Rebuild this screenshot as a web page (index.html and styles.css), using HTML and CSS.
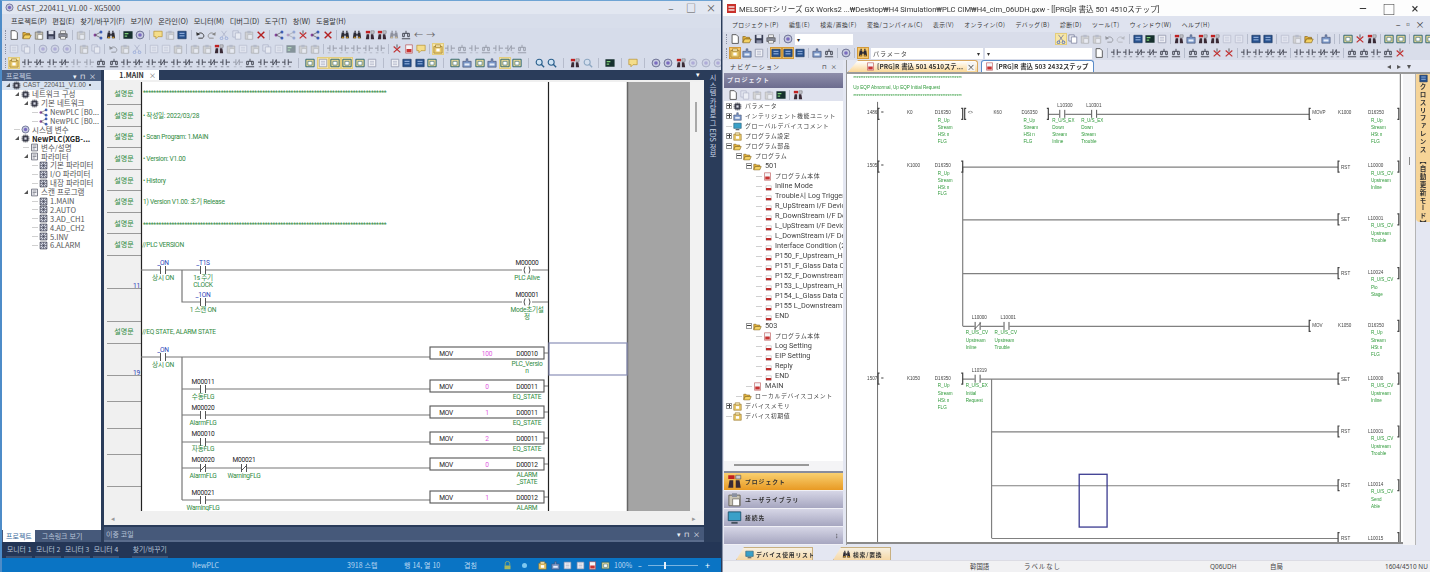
FILE: index.html
```html
<!DOCTYPE html>
<html lang="ko">
<head>
<meta charset="utf-8">
<title>XG5000 / GX Works2</title>
<link rel="stylesheet" href="styles.css">
</head>
<body>
<svg class="sprite" aria-hidden="true">
<defs>
<symbol id="d" viewBox="0 0 12 12"><path d="M2.5.8h5l2.5 2.5v8H2.5z" fill="#fff" stroke="#444"/></symbol>
<symbol id="o" viewBox="0 0 12 12"><path d="M1 3h3l1 1h4v2H3L1 10z" fill="#e3b23c" stroke="#7a5a12" stroke-width=".7"/><path d="M3 6h8l-2 4.5H1z" fill="#f4d264" stroke="#7a5a12" stroke-width=".7"/></symbol>
<symbol id="s" viewBox="0 0 12 12"><path d="M1 1h10v10H1z" fill="#3a3f55"/><path d="M3 1h6v4H3z" fill="#dfe3ee"/><path d="M3 7.500h6V11H3z" fill="#8a90a8"/></symbol>
<symbol id="p" viewBox="0 0 12 12"><path d="M3 1h6v3H3z" fill="#fff" stroke="#555" stroke-width=".7"/><path d="M1 4.500h10v4.500H1z" fill="#8c8f9c" stroke="#444" stroke-width=".7"/><path d="M3 8h6v3H3z" fill="#fff" stroke="#555" stroke-width=".7"/></symbol>
<symbol id="u" viewBox="0 0 12 12"><path d="M3 5.500c2-3 6.500-2.500 7.500 1 .3 1.500-.5 2.500-1.500 3.300H4" fill="none" stroke="#333" stroke-width="1.100"/><path d="M1.500 2.500l.5 4.500 4-1.500z" fill="#333"/></symbol>
<symbol id="r" viewBox="0 0 12 12"><path d="M9 5.500c-2-3-6.500-2.500-7.500 1-.3 1.500.5 2.500 1.500 3.300H8" fill="none" stroke="#888" stroke-width="1.100"/><path d="M10.500 2.500L10 7 6 5.500z" fill="#888"/></symbol>
<symbol id="c" viewBox="0 0 12 12"><path d="M3 1l5.500 7.500M9 1L3.500 8.500" stroke="#7a80a0" fill="none"/><circle cx="3" cy="10" r="1.600" fill="none" stroke="#3b5fc0"/><circle cx="9" cy="10" r="1.600" fill="none" stroke="#3b5fc0"/></symbol>
<symbol id="y" viewBox="0 0 12 12"><path d="M1 1h6.500v7.500H1z" fill="#e8ebf4" stroke="#6a7090" stroke-width=".8"/><path d="M4 3.500h6.500V11H4z" fill="#fff" stroke="#6a7090" stroke-width=".8"/></symbol>
<symbol id="a" viewBox="0 0 12 12"><path d="M1.500 2.500h9V11h-9z" fill="#c9c4b4" stroke="#6d6a60" stroke-width=".8"/><path d="M4 1h4v3H4z" fill="#8a90a0"/><path d="M4.500 5.500H10V11H4.500z" fill="#fff" stroke="#6d6a60" stroke-width=".6"/></symbol>
<symbol id="x" viewBox="0 0 12 12"><path d="M2 2l8 8M10 2l-8 8" stroke="#b32020" stroke-width="1.700"/></symbol>
<symbol id="b" viewBox="0 0 12 12"><path d="M1 10l1-7h3v7zM7 10V3h3l1 7z" fill="#2a2a35"/><path d="M3 1h1.500v2H3zM7.500 1H9v2H7.500zM5 4.500h2v2.500H5z" fill="#2a2a35"/><path d="M2 8h2.500v2H2zM7.500 8H10v2H7.500z" fill="#c08a20"/></symbol>
<symbol id="bd" viewBox="0 0 12 12"><path d="M1 11l1-6h3v6zM7 11V5h3l1 6z" fill="#3a2a35"/><path d="M1 1h5v3H1z" fill="#c02020"/><path d="M7 1h4v3H7z" fill="#c9c9d0" stroke="#555" stroke-width=".5"/></symbol>
<symbol id="n" viewBox="0 0 12 12"><circle cx="2.500" cy="6" r="1.800" fill="#8a3fa0"/><circle cx="9.500" cy="2.500" r="1.800" fill="#3b5fc0"/><circle cx="9.500" cy="9.500" r="1.800" fill="#3b5fc0"/><path d="M2.500 6l7-3.500M2.500 6l7 3.500" stroke="#555" stroke-width=".8"/></symbol>
<symbol id="m" viewBox="0 0 12 12"><path d="M.5 1.500h11v9H.500z" fill="#16302e"/><path d="M2 3.500h4.500V5H2zM2 6.500h3V8H2z" fill="#7fd07a"/></symbol>
<symbol id="e" viewBox="0 0 12 12"><circle cx="6" cy="6" r="4.700" fill="#c8cce0" stroke="#5a5f85"/><circle cx="6" cy="6" r="2.200" fill="#7a6cc0"/></symbol>
<symbol id="q" viewBox="0 0 12 12"><path d="M1 1.500h10v6.500H6L3.500 10.500V8H1z" fill="#f4dd8a" stroke="#b7902a" stroke-width=".8"/></symbol>
<symbol id="w" viewBox="0 0 12 12"><path d="M1.500 1.500h9v9h-9z" fill="#f1f2f7" stroke="#8d92a8" stroke-width=".9"/><path d="M3.500 4h5M3.500 6h5M3.500 8h5" stroke="#9aa0b8" stroke-width=".7"/></symbol>
<symbol id="k" viewBox="0 0 12 12"><path d="M1 1.500h10v9H1z" fill="#26508c" stroke="#14305c" stroke-width=".7"/><path d="M3 4h6M3 7h6" stroke="#a8c4ee" stroke-width="1.100"/></symbol>
<symbol id="h" viewBox="0 0 12 12"><path d="M1 1.500h10v9H1z" fill="#e7d896" stroke="#27616e" stroke-width="1.100"/><path d="M3.500 4h5v4.500h-5z" fill="#fff" stroke="#27616e" stroke-width=".7"/></symbol>
<symbol id="t" viewBox="0 0 12 12"><path d="M0 5h3.500M3.500 1.500v7M7.500 1.500v7M7.500 5H12" stroke="#3c3f4c" stroke-width="1.100"/><path d="M1 10.500h3M8 10.500h3" stroke="#7c7f8c"/></symbol>
<symbol id="v" viewBox="0 0 12 12"><path d="M0 5h3.500M3.500 1.500v7M7.500 1.500v7M7.500 5H12M3.500 8.500l4-6" stroke="#3c3f4c" stroke-width="1.100"/><path d="M1 10.500h3M8 10.500h3" stroke="#7c7f8c"/></symbol>
<symbol id="f" viewBox="0 0 12 12"><path d="M2 4h8M6 1v3M2 4v4h2V4M8 4v4h2V4M1 10.500h10" stroke="#3c3f4c" fill="none" stroke-width="1.100"/></symbol>
<symbol id="g" viewBox="0 0 12 12"><path d="M2 3l8 7M10 3l-8 7" stroke="#c03030" stroke-width="1.400"/><path d="M6 .5v4" stroke="#444"/></symbol>
<symbol id="z" viewBox="0 0 12 12"><circle cx="5" cy="5" r="3.600" fill="#cfe3f4" stroke="#2a5f8c" stroke-width="1.300"/><path d="M7.500 7.500L11 11" stroke="#2a5f8c" stroke-width="1.600"/></symbol>
<symbol id="l" viewBox="0 0 12 12"><path d="M2 1h8v10H2z" fill="#f6f6f8" stroke="#b23a3a" stroke-width=".7"/><path d="M3 6h6v4H3z" fill="#c83232"/></symbol>
<symbol id="ls" viewBox="0 0 12 12"><path d="M4 5h7v6H4z" fill="#fff" stroke="#999" stroke-width=".6"/><path d="M4 8h7v3H4z" fill="#c02a2a"/></symbol>
<symbol id="j" viewBox="0 0 12 12"><path d="M1 4h4V1h2v3h4v7H1z" fill="#7a97c8" stroke="#444c6c" stroke-width=".7"/><path d="M3 6.500h6V9H3z" fill="#e8eef8"/></symbol>
<symbol id="i" viewBox="0 0 12 12"><path d="M1 3h10v8H1z" fill="#e8c96c" stroke="#8d6a1c" stroke-width=".7"/><path d="M3 1h6v3H3z" fill="#f4e6b0" stroke="#8d6a1c" stroke-width=".7"/><path d="M4 5.500h4V9H4z" fill="#fff"/></symbol>
<symbol id="pc" viewBox="0 0 12 12"><path d="M1 1.500h10v7H1z" fill="#3aa0c8" stroke="#1c4f68" stroke-width=".7"/><path d="M3.500 9.500h5v1.500h-5z" fill="#44505c"/></symbol>
<symbol id="cp" viewBox="0 0 12 12"><path d="M2.500 2.500h7v7h-7z" fill="#55596a" stroke="#2c2f3a" stroke-width=".7"/><path d="M4 .5v11M6 .5v11M8 .5v11M.5 4h11M.5 6h11M.5 8h11" stroke="#2c2f3a" stroke-width=".6"/><path d="M4.500 4.500h3v3h-3z" fill="#d8dbe6"/></symbol>
<symbol id="gd" viewBox="0 0 12 12"><path d="M1.500 1.500h9v9h-9z" fill="#d8dbe6" stroke="#33364a"/><path d="M1.500 1.500l9 9M10.500 1.500l-9 9M6 1.500v9M1.500 6h9" stroke="#33364a" stroke-width=".7"/></symbol>
<symbol id="fg" viewBox="0 0 12 12"><path d="M2 1.500h8v9H2z" fill="#f2f2f6" stroke="#55596a"/><path d="M3.500 4h5M3.500 6h5M3.500 8h3" stroke="#55596a" stroke-width=".8"/></symbol>
<g id="no"><rect x="-3" y="-1.500" width="6" height="3" fill="#fff"/><path d="M-2.500-4V4M2.500-4V4" stroke="#555"/></g>
<g id="nc"><rect x="-3" y="-1.500" width="6" height="3" fill="#fff"/><path d="M-2.500-4V4M2.500-4V4M-3 3L3-3" stroke="#555"/></g>
<g id="co"><rect x="-5" y="-1.500" width="10" height="3" fill="#fff"/><path d="M-2-3.500Q-4 0-2 3.500M2-3.500Q4 0 2 3.500" fill="none" stroke="#555"/></g>
<g id="rb"><path d="M1.500-5.500H0V5.500H1.500" fill="none" stroke="#444" stroke-width="1.200"/></g>
<g id="lb"><path d="M-1.500-5.500H0V5.500H-1.500" fill="none" stroke="#444" stroke-width="1.200"/></g>
</defs>
</svg>

<main class="desk">

<section class="win xg">
<header class="tit xgt"><svg class="ticon"><use href="#e"/></svg><span>CAST_220411_V1.00 - XG5000</span><div class="ctl"><span>–</span><span>□</span><span>×</span></div></header>
<nav class="menu xgm"><span>프로젝트(P)</span><span>편집(E)</span><span>찾기/바꾸기(F)</span><span>보기(V)</span><span>온라인(O)</span><span>모니터(M)</span><span>디버그(D)</span><span>도구(T)</span><span>창(W)</span><span>도움말(H)</span></nav>
<div class="tb xb x1">
<svg class="ic"><use href="#d"/></svg><svg class="ic"><use href="#o"/></svg><svg class="ic"><use href="#a"/></svg><svg class="ic"><use href="#s"/></svg><svg class="ic"><use href="#p"/></svg><b class="sp"></b>
<svg class="ic off"><use href="#a"/></svg><b class="sp"></b>
<svg class="ic"><use href="#n"/></svg><svg class="ic"><use href="#b"/></svg><b class="sp"></b>
<svg class="ic"><use href="#m"/></svg><svg class="ic"><use href="#e"/></svg><b class="sp"></b>
<svg class="ic"><use href="#q"/></svg><svg class="ic off"><use href="#a"/></svg><svg class="ic"><use href="#k"/></svg><b class="sp"></b>
<svg class="ic"><use href="#u"/></svg><svg class="ic"><use href="#r"/></svg><svg class="ic off"><use href="#c"/></svg><svg class="ic off"><use href="#y"/></svg><svg class="ic off"><use href="#a"/></svg><svg class="ic"><use href="#x"/></svg><b class="sp"></b>
<svg class="ic"><use href="#n"/></svg><svg class="ic off"><use href="#n"/></svg><svg class="ic"><use href="#g"/></svg><svg class="ic"><use href="#n"/></svg><svg class="ic"><use href="#x"/></svg><b class="sp"></b>
<svg class="ic"><use href="#b"/></svg><svg class="ic"><use href="#b"/></svg><svg class="ic"><use href="#bd"/></svg><svg class="ic"><use href="#bd"/></svg><svg class="ic off"><use href="#b"/></svg><svg class="ic"><use href="#f"/></svg><span class="ar">←</span><span class="ar">→</span>
</div>
<div class="tb xb">
<svg class="ic off"><use href="#w"/></svg><svg class="ic off"><use href="#y"/></svg><b class="sp"></b>
<svg class="ic off"><use href="#e"/></svg><svg class="ic off"><use href="#e"/></svg><svg class="ic off"><use href="#e"/></svg><b class="sp"></b>
<svg class="ic off"><use href="#a"/></svg><svg class="ic off"><use href="#y"/></svg><b class="sp"></b>
<svg class="ic off"><use href="#u"/></svg><svg class="ic off"><use href="#a"/></svg><svg class="ic off"><use href="#c"/></svg><b class="sp"></b>
<svg class="ic off"><use href="#w"/></svg><svg class="ic off"><use href="#w"/></svg><svg class="ic off"><use href="#a"/></svg><b class="sp"></b>
<svg class="ic off"><use href="#a"/></svg><svg class="ic off"><use href="#a"/></svg><svg class="ic"><use href="#bd"/></svg><svg class="ic off"><use href="#a"/></svg><svg class="ic off"><use href="#w"/></svg><svg class="ic off"><use href="#a"/></svg><svg class="ic off"><use href="#y"/></svg><svg class="ic off"><use href="#w"/></svg><svg class="ic off"><use href="#m"/></svg><svg class="ic off"><use href="#a"/></svg><svg class="ic off"><use href="#a"/></svg><b class="sp"></b>
<svg class="ic off"><use href="#t"/></svg><svg class="ic off"><use href="#t"/></svg><svg class="ic off"><use href="#t"/></svg><svg class="ic off"><use href="#t"/></svg><svg class="ic off"><use href="#t"/></svg><b class="sp"></b>
<svg class="ic"><use href="#g"/></svg><svg class="ic"><use href="#l"/></svg><svg class="ic"><use href="#q"/></svg><b class="sp"></b>
<svg class="ic on"><use href="#i"/></svg><svg class="ic off"><use href="#t"/></svg><svg class="ic off"><use href="#f"/></svg><svg class="ic off"><use href="#t"/></svg><svg class="ic off"><use href="#f"/></svg><svg class="ic off"><use href="#t"/></svg><svg class="ic off"><use href="#v"/></svg><svg class="ic off"><use href="#f"/></svg>
</div>
<div class="tb xb x3">
<svg class="ic on"><use href="#i"/></svg><svg class="ic"><use href="#t"/></svg><svg class="ic"><use href="#v"/></svg><svg class="ic"><use href="#t"/></svg><svg class="ic"><use href="#v"/></svg><svg class="ic off"><use href="#t"/></svg><svg class="ic off"><use href="#t"/></svg><svg class="ic"><use href="#f"/></svg><svg class="ic"><use href="#f"/></svg><svg class="ic"><use href="#t"/></svg><svg class="ic"><use href="#v"/></svg><svg class="ic"><use href="#t"/></svg><svg class="ic"><use href="#v"/></svg><svg class="ic"><use href="#t"/></svg><svg class="ic"><use href="#v"/></svg><svg class="ic"><use href="#t"/></svg><svg class="ic"><use href="#v"/></svg><svg class="ic"><use href="#t"/></svg><svg class="ic off"><use href="#v"/></svg><svg class="ic"><use href="#f"/></svg><svg class="ic"><use href="#t"/></svg><svg class="ic"><use href="#v"/></svg><svg class="ic"><use href="#t"/></svg><b class="sp"></b>
<svg class="ic"><use href="#h"/></svg><svg class="ic on"><use href="#w"/></svg><svg class="ic on"><use href="#h"/></svg><svg class="ic on"><use href="#h"/></svg><svg class="ic"><use href="#h"/></svg><svg class="ic"><use href="#w"/></svg><b class="sp"></b>
<svg class="ic"><use href="#w"/></svg><svg class="ic"><use href="#k"/></svg><svg class="ic"><use href="#k"/></svg><svg class="ic"><use href="#h"/></svg><b class="sp"></b>
<svg class="ic"><use href="#h"/></svg><svg class="ic"><use href="#j"/></svg><svg class="ic"><use href="#h"/></svg><svg class="ic"><use href="#j"/></svg><svg class="ic on"><use href="#h"/></svg><svg class="ic"><use href="#h"/></svg><b class="sp"></b>
<svg class="ic"><use href="#z"/></svg><svg class="ic"><use href="#z"/></svg><b class="sp"></b>
<svg class="ic"><use href="#bd"/></svg><svg class="ic off"><use href="#z"/></svg><b class="sp"></b>
<svg class="ic"><use href="#m"/></svg><b class="sp"></b>
<svg class="ic"><use href="#q"/></svg><b class="sp"></b>
<svg class="ic"><use href="#e"/></svg><svg class="ic"><use href="#e"/></svg><svg class="ic"><use href="#bd"/></svg><svg class="ic off"><use href="#e"/></svg><svg class="ic off"><use href="#e"/></svg><svg class="ic off"><use href="#e"/></svg>
</div>

<div class="xmain">
<aside class="xleft">
<div class="phead"><span>프로젝트</span><span class="phc">▾ ⊓ ×</span></div>
<div class="xtree">
<div class="xr sel"><i class="ex op"></i><svg class="ti"><use href="#cp"/></svg><span>CAST_220411_V1.00</span><i class="mk"></i></div>
<div class="xk">
<div class="xr"><i class="ex op"></i><svg class="ti"><use href="#cp"/></svg><span>네트워크 구성</span></div>
<div class="xk">
<div class="xr"><i class="ex op"></i><svg class="ti"><use href="#cp"/></svg><span>기본 네트워크</span></div>
<div class="xk">
<div class="xr"><i class="ex"></i><svg class="ti"><use href="#n"/></svg><span>NewPLC [B0...</span></div>
<div class="xr"><i class="ex"></i><svg class="ti"><use href="#n"/></svg><span>NewPLC [B0...</span></div>
</div></div>
<div class="xr"><i class="ex"></i><svg class="ti"><use href="#e"/></svg><span>시스템 변수</span></div>
<div class="xr"><i class="ex op"></i><svg class="ti"><use href="#cp"/></svg><strong>NewPLC(XGB-...</strong></div>
<div class="xk">
<div class="xr"><i class="ex"></i><svg class="ti"><use href="#fg"/></svg><span>변수/설명</span></div>
<div class="xr"><i class="ex op"></i><svg class="ti"><use href="#fg"/></svg><span>파라미터</span></div>
<div class="xk">
<div class="xr"><i class="ex"></i><svg class="ti"><use href="#gd"/></svg><span>기본 파라미터</span></div>
<div class="xr"><i class="ex"></i><svg class="ti"><use href="#gd"/></svg><span>I/O 파라미터</span></div>
<div class="xr"><i class="ex"></i><svg class="ti"><use href="#gd"/></svg><span>내장 파라미터</span></div>
</div>
<div class="xr"><i class="ex op"></i><svg class="ti"><use href="#fg"/></svg><span>스캔 프로그램</span></div>
<div class="xk">
<div class="xr"><i class="ex"></i><svg class="ti"><use href="#gd"/></svg><span>1.MAIN</span></div>
<div class="xr"><i class="ex"></i><svg class="ti"><use href="#gd"/></svg><span>2.AUTO</span></div>
<div class="xr"><i class="ex"></i><svg class="ti"><use href="#gd"/></svg><span>3.AD_CH1</span></div>
<div class="xr"><i class="ex"></i><svg class="ti"><use href="#gd"/></svg><span>4.AD_CH2</span></div>
<div class="xr"><i class="ex"></i><svg class="ti"><use href="#gd"/></svg><span>5.INV</span></div>
<div class="xr"><i class="ex"></i><svg class="ti"><use href="#gd"/></svg><span>6.ALARM</span></div>
</div></div></div>
</div>
<div class="ptabs"><span class="act">프로젝트</span><span>그속링크 보기</span></div>
</aside>
<div class="xcen">
<div class="dtabs"><span class="dtab">1.MAIN<em>×</em></span><span class="dmore">▾</span></div>
<div class="dframe">
<div class="drow">
<svg class="lad" viewBox="107 82 583 429" width="583" height="429">
<rect x="107" y="82" width="34" height="429" fill="#f0f0f0"/>
<rect x="549" y="82" width="78" height="429" fill="#fff"/>
<rect x="628" y="82" width="62" height="429" fill="#a4a4a4"/>
<path class="gl" d="M107 104.500h34M107 126.500h34M107 147.500h34M107 169.500h34M107 190.500h34M107 212.500h34M107 233.500h34M107 255.500h34M107 288.500h34M107 321.500h34M107 343.500h34M107 375.500h34M107 401.500h34M107 428.500h34M107 454.500h34M107 486.500h34"/>
<path class="kl" d="M141.500 82v429M548.500 82v429"/>
<path class="gv" d="M627.500 82v429"/>
<rect x="549" y="343" width="78" height="32" fill="none" stroke="#8a90b8" stroke-width="1.200"/>
<g class="cn gr">
<text x="124" y="96">설명문</text><text x="124" y="117.500">설명문</text><text x="124" y="139">설명문</text><text x="124" y="161">설명문</text><text x="124" y="182.500">설명문</text><text x="124" y="204">설명문</text><text x="124" y="226">설명문</text><text x="124" y="247">설명문</text><text x="124" y="334">설명문</text>
</g>
<g class="mn gr">
<text x="143" y="95">**********************************************************************************************</text>
<text x="143" y="118">• 작성일: 2022/03/28</text>
<text x="143" y="139">• Scan Program: 1.MAIN</text>
<text x="143" y="161">• Version: V1.00</text>
<text x="143" y="182.500">• History</text>
<text x="143" y="204">1) Version V1.00: 초기 Release</text>
<text x="143" y="227">**********************************************************************************************</text>
<text x="142" y="247">//PLC VERSION</text>
<text x="142" y="334">//EQ STATE, ALARM STATE</text>
</g>
<text class="mn bl en" x="140" y="288">11</text>
<text class="mn bl en" x="140" y="375">19</text>
<path class="rg" d="M141 270H525M182 270V302H525M530 270h18M530 302h18M141 357H430M182 357V500M182 389H430M182 415H430M182 442H430M182 468H430M182 500H430M544 353h4M544 386h4M544 412h4M544 438h4M544 464h4M544 497h4"/>
<use href="#no" x="163" y="270"/><use href="#no" x="203" y="270"/><use href="#no" x="203" y="302"/>
<use href="#co" x="527" y="270"/><use href="#co" x="527" y="302"/>
<use href="#no" x="163" y="357"/><use href="#no" x="203" y="389"/><use href="#no" x="203" y="415"/><use href="#no" x="203" y="442"/><use href="#nc" x="203" y="468"/><use href="#nc" x="244" y="468"/><use href="#no" x="203" y="500"/>
<g class="mn bl mid"><text x="163" y="265">_ON</text><text x="203" y="265">_T1S</text><text x="203" y="297">_1ON</text><text x="163" y="352">_ON</text></g>
<g class="mn gr mid">
<text x="163" y="280">상시 ON</text><text x="203" y="280">1s 주기</text><text x="203" y="287">CLOCK</text><text x="203" y="312">1 스캔 ON</text><text x="527" y="280">PLC Alive</text><text x="527" y="312">Mode초기설</text><text x="527" y="319">정</text>
<text x="163" y="367">상시 ON</text><text x="203" y="399">수동FLG</text><text x="203" y="425">AlarmFLG</text><text x="203" y="451">자동FLG</text><text x="203" y="478">AlarmFLG</text><text x="244" y="478">WarningFLG</text><text x="203" y="510">WarningFLG</text>
<text x="527" y="366">PLC_Versio</text><text x="527" y="373">n</text><text x="527" y="399">EQ_STATE</text><text x="527" y="425">EQ_STATE</text><text x="527" y="451">EQ_STATE</text><text x="527" y="477">ALARM</text><text x="527" y="484">_STATE</text><text x="527" y="510">ALARM</text>
</g>
<g class="mn kk mid">
<text x="527" y="265">M00000</text><text x="527" y="297">M00001</text>
<text x="203" y="384">M00011</text><text x="203" y="410">M00020</text><text x="203" y="436">M00010</text><text x="203" y="462">M00020</text><text x="244" y="462">M00021</text><text x="203" y="495">M00021</text>
</g>
<g class="fb"><rect x="430" y="347" width="114" height="12"/><rect x="430" y="380" width="114" height="12"/><rect x="430" y="406" width="114" height="12"/><rect x="430" y="432" width="114" height="12"/><rect x="430" y="458" width="114" height="12"/><rect x="430" y="491" width="114" height="12"/></g>
<g class="mn kk mid"><text x="446" y="356">MOV</text><text x="446" y="389">MOV</text><text x="446" y="415">MOV</text><text x="446" y="441">MOV</text><text x="446" y="467">MOV</text><text x="446" y="500">MOV</text>
<text x="527" y="356">D00010</text><text x="527" y="389">D00011</text><text x="527" y="415">D00011</text><text x="527" y="441">D00011</text><text x="527" y="467">D00012</text><text x="527" y="500">D00012</text></g>
<g class="mn pk mid"><text x="487" y="356">100</text><text x="487" y="389">0</text><text x="487" y="415">1</text><text x="487" y="441">2</text><text x="487" y="467">0</text><text x="487" y="500">1</text></g>
</svg>
<div class="vscr"><i class="vt"></i></div>
</div>
<div class="hscr"><span>◂</span><span>▸</span></div>
</div>
<div class="xside">시스템 카탈로그 EDS 정보</div>
<div class="dbl"><span>이중 코일</span><span class="phc">▾ ⊓ ×</span></div>
</div>
</div>
<div class="mons"><span>모니터 1</span><span>모니터 2</span><span>모니터 3</span><span>모니터 4</span><span class="find">찾기/바꾸기</span></div>
<footer class="xst"><span class="s1">NewPLC</span><span class="s2">3918 스텝</span><span class="s3">행 14, 열 10</span><span class="s4">겹침</span><svg class="sc lock" viewBox="0 0 12 12"><path d="M3 6V3.500a3 3 0 0 1 6 0V6" fill="none" stroke="#a8b860"/><path d="M2 6h8v5H2z" fill="#a8b860"/></svg><i class="dot"></i><svg class="sc"><use href="#i"/></svg><svg class="sc"><use href="#j"/></svg><svg class="sc"><use href="#w"/></svg><svg class="sc"><use href="#w"/></svg><svg class="sc"><use href="#l"/></svg><svg class="sc"><use href="#h"/></svg><span class="s5">100%</span><span class="s6">–</span><span class="sld"><i></i></span><span class="s7">+</span></footer>
</section>

<section class="win gx">
<header class="tit gxt"><svg class="ticon" viewBox="0 0 12 12"><path d="M0 0h12v12H0z" fill="#c8302a"/><path d="M2 3h8v2H2zM2 7h8v2H2z" fill="#f4dede"/></svg><span>MELSOFTシリーズ GX Works2 ...₩Desktop₩H4 Simulation₩PLC CIM₩H4_cim_06UDH.gxw - [[PRG]R 書込 501 4510ステップ]</span><div class="ctl gctl"><span>–</span><span>□</span><span>×</span></div></header>
<nav class="menu gxm"><span>プロジェクト(P)</span><span>編集(E)</span><span>検索/置換(F)</span><span>変換/コンパイル(C)</span><span>表示(V)</span><span>オンライン(O)</span><span>デバッグ(B)</span><span>診断(D)</span><span>ツール(T)</span><span>ウィンドウ(W)</span><span>ヘルプ(H)</span><span class="mdi">– ▫ ×</span></nav>
<div class="tb gb g1">
<svg class="ic"><use href="#d"/></svg><svg class="ic"><use href="#o"/></svg><svg class="ic"><use href="#s"/></svg><svg class="ic"><use href="#p"/></svg><b class="sp"></b><svg class="ic"><use href="#e"/></svg>
<span class="combo c1"><em>▾</em></span><b class="fill"></b>
<svg class="ic on"><use href="#c"/></svg><svg class="ic"><use href="#y"/></svg><svg class="ic off"><use href="#a"/></svg><svg class="ic off"><use href="#a"/></svg><svg class="ic off"><use href="#u"/></svg><svg class="ic off"><use href="#r"/></svg><b class="sp"></b>
<svg class="ic"><use href="#k"/></svg><svg class="ic"><use href="#m"/></svg><svg class="ic"><use href="#w"/></svg><b class="sp"></b>
<svg class="ic"><use href="#bd"/></svg><svg class="ic"><use href="#j"/></svg><svg class="ic"><use href="#bd"/></svg><svg class="ic"><use href="#bd"/></svg><svg class="ic off"><use href="#w"/></svg><svg class="ic off"><use href="#w"/></svg><b class="sp"></b>
<svg class="ic"><use href="#k"/></svg><svg class="ic"><use href="#k"/></svg><b class="sp"></b>
<svg class="ic off"><use href="#w"/></svg><svg class="ic off"><use href="#a"/></svg><svg class="ic"><use href="#o"/></svg><b class="sp"></b><svg class="ic"><use href="#j"/></svg><b class="sp"></b><b class="sp"></b>
<svg class="ic"><use href="#h"/></svg><svg class="ic"><use href="#g"/></svg><svg class="ic"><use href="#bd"/></svg><b class="sp"></b><svg class="ic"><use href="#h"/></svg><svg class="ic"><use href="#h"/></svg><b class="sp"></b><svg class="ic"><use href="#h"/></svg><svg class="ic"><use href="#h"/></svg>
</div>
<div class="tb gb g2">
<svg class="ic on2"><use href="#i"/></svg><svg class="ic"><use href="#j"/></svg><svg class="ic"><use href="#w"/></svg><b class="sp"></b><svg class="ic on2"><use href="#k"/></svg><svg class="ic on2"><use href="#k"/></svg><svg class="ic"><use href="#k"/></svg><b class="sp"></b><svg class="ic"><use href="#j"/></svg><svg class="ic"><use href="#f"/></svg><b class="sp"></b><svg class="ic"><use href="#e"/></svg><b class="sp"></b><svg class="ic on2"><use href="#b"/></svg>
<span class="combo c2">パラメータ<em>▾</em></span><span class="combo c3"><em>▾</em></span><svg class="ic"><use href="#d"/></svg><b class="sp"></b>
<svg class="ic"><use href="#t"/></svg><svg class="ic"><use href="#t"/></svg><svg class="ic"><use href="#v"/></svg><svg class="ic"><use href="#v"/></svg><svg class="ic"><use href="#f"/></svg><svg class="ic"><use href="#f"/></svg><b class="sp"></b>
<svg class="ic"><use href="#f"/></svg><svg class="ic"><use href="#f"/></svg><svg class="ic"><use href="#g"/></svg><svg class="ic"><use href="#g"/></svg><b class="sp"></b>
<svg class="ic"><use href="#t"/></svg><svg class="ic"><use href="#t"/></svg><svg class="ic"><use href="#v"/></svg><svg class="ic"><use href="#v"/></svg><b class="sp"></b>
<svg class="ic"><use href="#t"/></svg><svg class="ic"><use href="#t"/></svg><svg class="ic"><use href="#v"/></svg><svg class="ic"><use href="#v"/></svg><b class="sp"></b>
<svg class="ic"><use href="#f"/></svg><svg class="ic"><use href="#f"/></svg><svg class="ic"><use href="#t"/></svg><svg class="ic"><use href="#f"/></svg><svg class="ic"><use href="#g"/></svg>
</div>
<div class="gmain">
<aside class="gnav">
<div class="nhead"><span>ナビゲーション</span><span>⊓ ×</span></div>
<div class="nband">プロジェクト</div>
<div class="ntool"><svg class="ic"><use href="#d"/></svg><svg class="ic off"><use href="#y"/></svg><svg class="ic off"><use href="#a"/></svg><svg class="ic off"><use href="#a"/></svg><svg class="ic"><use href="#m"/></svg><b class="sp"></b><svg class="ic"><use href="#bd"/></svg></div>
<div class="gtree">
<div class="gr0"><i class="ex pl"></i><svg class="ti"><use href="#cp"/></svg><span class="jk">パラメータ</span></div>
<div class="gr0"><i class="ex pl"></i><svg class="ti"><use href="#j"/></svg><span class="jk">インテリジェント機能ユニット</span></div>
<div class="gr0"><i class="ex"></i><svg class="ti"><use href="#pc"/></svg><span class="jk">グローバルデバイスコメント</span></div>
<div class="gr0"><i class="ex pl"></i><svg class="ti"><use href="#i"/></svg><span class="jk">プログラム設定</span></div>
<div class="gr0"><i class="ex mi"></i><svg class="ti"><use href="#o"/></svg><span class="jk">プログラム部品</span></div>
<div class="gk">
<div class="gr0"><i class="ex mi"></i><svg class="ti"><use href="#o"/></svg><span class="jk">プログラム</span></div>
<div class="gk">
<div class="gr0"><i class="ex mi"></i><svg class="ti"><use href="#o"/></svg><span>501</span></div>
<div class="gk">
<div class="gr0"><i class="ex"></i><svg class="ti"><use href="#l"/></svg><span class="jk">プログラム本体</span></div>
<div class="gr0"><i class="ex"></i><svg class="ti"><use href="#ls"/></svg><span>Inline Mode</span></div>
<div class="gr0"><i class="ex"></i><svg class="ti"><use href="#ls"/></svg><span>Trouble시 Log Trigger</span></div>
<div class="gr0"><i class="ex"></i><svg class="ti"><use href="#ls"/></svg><span>R_UpStream I/F Device</span></div>
<div class="gr0"><i class="ex"></i><svg class="ti"><use href="#ls"/></svg><span>R_DownStream I/F Device</span></div>
<div class="gr0"><i class="ex"></i><svg class="ti"><use href="#ls"/></svg><span>L_UpStream I/F Device</span></div>
<div class="gr0"><i class="ex"></i><svg class="ti"><use href="#ls"/></svg><span>L_DownStream I/F Device</span></div>
<div class="gr0"><i class="ex"></i><svg class="ti"><use href="#ls"/></svg><span>Interface Condition (2)</span></div>
<div class="gr0"><i class="ex"></i><svg class="ti"><use href="#ls"/></svg><span>P150_F_Upstream_H/S</span></div>
<div class="gr0"><i class="ex"></i><svg class="ti"><use href="#ls"/></svg><span>P151_F_Glass Data Check</span></div>
<div class="gr0"><i class="ex"></i><svg class="ti"><use href="#ls"/></svg><span>P152_F_Downstream H/S</span></div>
<div class="gr0"><i class="ex"></i><svg class="ti"><use href="#ls"/></svg><span>P153_L_Upstream_H/S</span></div>
<div class="gr0"><i class="ex"></i><svg class="ti"><use href="#ls"/></svg><span>P154_L_Glass Data Check</span></div>
<div class="gr0"><i class="ex"></i><svg class="ti"><use href="#ls"/></svg><span>P155 L_Downstream H/S</span></div>
<div class="gr0"><i class="ex"></i><svg class="ti"><use href="#ls"/></svg><span>END</span></div>
</div>
<div class="gr0"><i class="ex mi"></i><svg class="ti"><use href="#o"/></svg><span>503</span></div>
<div class="gk">
<div class="gr0"><i class="ex"></i><svg class="ti"><use href="#l"/></svg><span class="jk">プログラム本体</span></div>
<div class="gr0"><i class="ex"></i><svg class="ti"><use href="#ls"/></svg><span>Log Setting</span></div>
<div class="gr0"><i class="ex"></i><svg class="ti"><use href="#ls"/></svg><span>EIP Setting</span></div>
<div class="gr0"><i class="ex"></i><svg class="ti"><use href="#ls"/></svg><span>Reply</span></div>
<div class="gr0"><i class="ex"></i><svg class="ti"><use href="#ls"/></svg><span>END</span></div>
</div>
<div class="gr0"><i class="ex"></i><svg class="ti"><use href="#l"/></svg><span>MAIN</span></div>
</div>
<div class="gr0"><i class="ex"></i><svg class="ti"><use href="#o"/></svg><span class="jk">ローカルデバイスコメント</span></div>
</div>
<div class="gr0"><i class="ex pl"></i><svg class="ti"><use href="#i"/></svg><span class="jk">デバイスメモリ</span></div>
<div class="gr0"><i class="ex"></i><svg class="ti"><use href="#i"/></svg><span class="jk">デバイス初期値</span></div>
</div>
<div class="nscr"><i></i></div>
<div class="nbtn act"><svg class="nb"><use href="#bd"/></svg>プロジェクト</div>
<div class="nbtn"><svg class="nb"><use href="#a"/></svg>ユーザライブラリ</div>
<div class="nbtn"><svg class="nb"><use href="#pc"/></svg>接続先</div>
<div class="nbtn"><span class="nmore">⁝</span></div>
</aside>
<div class="gedit">
<div class="etabs"><span class="etab act"><svg class="ti"><use href="#l"/></svg>[PRG]R 書込 501 4510ステ...<em>×</em></span><span class="etab e2"><svg class="ti"><use href="#l"/></svg>[PRG]R 書込 503 2432ステップ</span><span class="enav">◂ ▸ ▾</span></div>
<div class="ebody">
<svg class="rlad" viewBox="846 75 556 470" width="556" height="470">
<path class="rv" d="M875.500 103V545M1400.500 75V545"/>
<g class="tn gg"><text x="851" y="81">*************************************************************</text><text x="851" y="90">Up EQP Abnormal, Up EQP Initial Request</text><text x="851" y="99">*************************************************************</text></g>
<path class="rr" d="M1047 115.500H1309M961 168.500H1338M961 168V328M961 221.500H1338M961 275.500H1338M961 328.500H1309M961 381.500H1338M990 381V541M990 434.500H1338M990 488.500H1338M990 541.500H1338"/>
<use href="#no" x="1061" y="115"/><use href="#no" x="1093" y="115"/><use href="#nc" x="976" y="328"/><use href="#no" x="1005" y="328"/><use href="#no" x="976" y="381"/>
<rect x="1078" y="477" width="28" height="53" fill="none" stroke="#3a3a90" stroke-width="1.300"/>
<use href="#rb" x="876" y="115"/><use href="#lb" x="961" y="115"/><use href="#rb" x="963" y="115"/><use href="#lb" x="1047" y="115"/><use href="#rb" x="1309" y="115"/><use href="#lb" x="1399" y="115"/>
<use href="#rb" x="876" y="168"/><use href="#lb" x="961" y="168"/><use href="#rb" x="1338" y="168"/><use href="#lb" x="1399" y="168"/><use href="#rb" x="1338" y="221"/><use href="#lb" x="1399" y="221"/><use href="#rb" x="1338" y="275"/><use href="#lb" x="1399" y="275"/><use href="#rb" x="1309" y="328"/><use href="#lb" x="1399" y="328"/>
<use href="#rb" x="876" y="381"/><use href="#lb" x="961" y="381"/><use href="#rb" x="1338" y="381"/><use href="#lb" x="1399" y="381"/><use href="#rb" x="1338" y="434"/><use href="#lb" x="1399" y="434"/><use href="#rb" x="1338" y="488"/><use href="#lb" x="1399" y="488"/><use href="#rb" x="1338" y="541"/><use href="#lb" x="1399" y="541"/>
<g class="tn dk">
<text x="865" y="115.500">1486</text><text x="879" y="115.500">=</text><text x="905" y="115.500">K0</text><text x="933" y="115.500">D16350</text><text x="966" y="115.500">&lt;&gt;</text><text x="992" y="115.500">K60</text><text x="1020" y="115.500">D16350</text><text x="1056" y="108.500">L10300</text><text x="1085" y="108.500">L10301</text><text x="1312" y="115.500">MOVP</text><text x="1338" y="115.500">K1000</text><text x="1368" y="115.500">D16350</text>
<text x="865" y="168.500">1505</text><text x="879" y="168.500">=</text><text x="905" y="168.500">K1000</text><text x="933" y="168.500">D16350</text><text x="1341" y="170">RST</text><text x="1368" y="168.500">L10000</text>
<text x="1341" y="223">SET</text><text x="1368" y="222">L10001</text><text x="1341" y="276.500">RST</text><text x="1368" y="276">L10024</text>
<text x="970" y="321">L10000</text><text x="999" y="321">L10001</text><text x="1312" y="329.500">MOV</text><text x="1338" y="329.500">K1050</text><text x="1368" y="329.500">D16350</text>
<text x="865" y="382.500">1507</text><text x="879" y="382.500">=</text><text x="905" y="382.500">K1050</text><text x="933" y="382.500">D16350</text><text x="970" y="374">L10319</text><text x="1341" y="383">SET</text><text x="1368" y="382.500">L10000</text>
<text x="1341" y="436">RST</text><text x="1368" y="435.500">L10001</text><text x="1341" y="489.500">RST</text><text x="1368" y="489">L10014</text><text x="1341" y="543">RST</text><text x="1368" y="543">L10015</text>
</g>
<g class="tn gg">
<text x="936" y="123">R_Up</text><text x="936" y="130">Stream</text><text x="936" y="137">HSt n</text><text x="936" y="144">FLG</text>
<text x="1022" y="123">R_Up</text><text x="1022" y="130">Stream</text><text x="1022" y="137">HSt n</text><text x="1022" y="144">FLG</text>
<text x="1051" y="123">R_U/S_EX</text><text x="1051" y="130">Down</text><text x="1051" y="137">Stream</text><text x="1051" y="144">Inline</text>
<text x="1080" y="123">R_U/S_EX</text><text x="1080" y="130">Down</text><text x="1080" y="137">Stream</text><text x="1080" y="144">Trouble</text>
<text x="1371" y="123">R_Up</text><text x="1371" y="130">Stream</text><text x="1371" y="137">HSt n</text><text x="1371" y="144">FLG</text>
<text x="936" y="176">R_Up</text><text x="936" y="183">Stream</text><text x="936" y="190">HSt n</text><text x="936" y="197">FLG</text>
<text x="1371" y="176">R_U/S_CV</text><text x="1371" y="183.500">Upstream</text><text x="1371" y="190.500">Inline</text>
<text x="1371" y="229">R_U/S_CV</text><text x="1371" y="237">Upstream</text><text x="1371" y="244">Trouble</text>
<text x="1371" y="283">R_U/S_CV</text><text x="1371" y="290.500">Pio</text><text x="1371" y="297.500">Stage</text>
<text x="964" y="336">R_U/S_CV</text><text x="964" y="344">Upstream</text><text x="964" y="351">Inline</text><text x="993" y="336">R_U/S_CV</text><text x="993" y="344">Upstream</text><text x="993" y="351">Trouble</text>
<text x="1371" y="336">R_Up</text><text x="1371" y="344">Stream</text><text x="1371" y="351">HSt n</text><text x="1371" y="358">FLG</text>
<text x="936" y="389">R_Up</text><text x="936" y="397">Stream</text><text x="936" y="404">HSt n</text><text x="936" y="411">FLG</text>
<text x="964" y="389">R_U/S_EX</text><text x="964" y="397">Initial</text><text x="964" y="404">Request</text>
<text x="1371" y="389.500">R_U/S_CV</text><text x="1371" y="397">Upstream</text><text x="1371" y="404">Inline</text>
<text x="1371" y="442.500">R_U/S_CV</text><text x="1371" y="450.500">Upstream</text><text x="1371" y="457.500">Trouble</text>
<text x="1371" y="496">R_U/S_CV</text><text x="1371" y="504">Send</text><text x="1371" y="511">Able</text>
</g>
</svg>
<div class="evs"><i></i></div>
<div class="xref"><svg class="ti"><use href="#k"/></svg><span>クロスリファレンス 【自動更新モード】</span></div>
</div>
</div>
</div>
<div class="gtabs"><span class="gt1"><svg class="ti"><use href="#pc"/></svg>デバイス使用リスト</span><span class="gt2"><svg class="ti"><use href="#b"/></svg>検索/置換</span></div>
<footer class="gst"><span class="g-1">韓国語</span><span class="g-2">ラベルなし</span><span class="g-3">Q06UDH</span><span class="g-4">自局</span><span class="g-5">1604/4510 NU</span></footer>
</section>
</main>
</body>
</html>
```

FILE: styles.css
```css
* { box-sizing: border-box; }
html, body { margin: 0; height: 100%; overflow: hidden; }
body { background: #2a3c5a; font-family: "Noto Sans CJK KR", "Noto Sans", sans-serif; font-size: 7.5px; }
.sprite { width: 0; height: 0; position: absolute; }
.desk { position: relative; width: 1430px; height: 572px; filter: blur(.3px); overflow: hidden; }
.win { position: absolute; top: 0; height: 572px; display: flex; flex-direction: column; overflow: hidden; }
.xg { left: 0; width: 721px; background: #2a3c5a; border-top: 1px solid #6ea4d4; border-left: 2px solid #4d8cc8; }
.gx { left: 722px; width: 708px; background: #e4e7f2; border-left: 1px solid #8a94aa; }

/* title bars */
.tit { display: flex; align-items: center; flex: none; color: #444; position: relative; white-space: nowrap; }
.ticon { width: 9px; height: 9px; flex: none; }
.ctl { position: absolute; top: 0; right: 0; display: flex; align-items: center; color: #555; font-size: 10px; height: 100%; }
.ctl span { width: 20px; text-align: center; }
.xgt { height: 13px; background: #e2e7f1; padding-left: 3px; gap: 3px; }
.gxt { height: 16px; background: #fdfdfd; padding-left: 4px; gap: 3px; font-size: 7.600px; font-family: Roboto, "Noto Sans CJK JP", sans-serif; color: #333; }
.gctl { font-size: 13px; color: #333; padding-right: 2px; }
.gctl span { width: 26px; }

/* menus */
.menu { display: flex; align-items: center; flex: none; color: #333; white-space: nowrap; }
.xgm { height: 14px; background: #d8deeb; padding-left: 9px; gap: 5.500px; font-size: 7.200px; }
.gxm { height: 16px; background: #dfe3ef; padding-left: 9px; gap: 10px; font-size: 5.800px; font-family: "Noto Sans CJK JP", sans-serif; letter-spacing: .5px; position: relative; }
.mdi { position: absolute; right: 5px; top: 2px; font-size: 9px; }

/* toolbars */
.tb { display: flex; align-items: center; flex: none; }
.tb::before { content: ""; width: 1px; height: 10px; border-left: 1px dotted #8a90a4; flex: none; }
.xb { height: 14px; background: #d6dcea; padding-left: 3px; gap: 2px; }
.x1 { gap: 2.250px; }
.x3 { gap: 2.420px; }
.x3 .sp { margin: 0 3.500px; }
.gb { height: 14px; background: #d9ddea; padding-left: 3px; gap: 2px; }
.ic { width: 10px; height: 10px; flex: none; }
.off { opacity: .42; }
.on { background: #f7e6a6; outline: 1px solid #e4cd7c; }
.on2 { background: #f7c86a; outline: 1px solid #d39a3a; }
.sp { width: 1px; height: 10px; margin: 0 1px; background: #b6bccc; flex: none; }
.ar { width: 10px; color: #666; font-size: 9px; text-align: center; line-height: 10px; }
.fill { flex: 0 0 199px; }
.combo { height: 11px; background: #fff; display: flex; align-items: center; justify-content: space-between; padding: 0 2px; flex: none; font-family: "Noto Sans CJK JP", sans-serif; font-size: 6.200px; letter-spacing: .8px; color: #444; }
.combo em { font-style: normal; font-size: 6px; color: #333; }
.c1 { width: 58px; }
.c2 { width: 112px; margin-left: 1px; }
.c3 { width: 107px; }

/* XG5000 main */
.xmain { flex: 1; min-height: 0; display: flex; }
.xleft { width: 99px; display: flex; flex-direction: column; flex: none; }
.phead { height: 11px; background: #4a5e80; color: #c8d2e2; display: flex; justify-content: space-between; align-items: center; padding: 0 4px; flex: none; font-size: 7px; }
.phc { color: #eef2f8; font-size: 7px; letter-spacing: 1px; }
.xtree { flex: 1; background: #fff; color: #555; overflow: hidden; font-size: 7.500px; }
.xr { height: 8.900px; display: flex; align-items: center; white-space: nowrap; padding-left: 3px; line-height: 8px; }
.xr strong { font-weight: 700; color: #222; margin-left: 2px; }
.xr span { margin-left: 2px; }
.sel { background: #d8e2f0; }
.sel span { font-family: "Liberation Sans", sans-serif; font-size: 6.500px; }
.mk { width: 2px; height: 2px; margin-left: 3px; background: #555; flex: none; }
.xk { margin-left: 9px; }
.ex { width: 6px; flex: none; height: 1px; background: #d0d0d0; margin-right: 1px; position: relative; }
.ex.op { background: none; height: 5px; }
.ex.op::after { content: ""; position: absolute; left: 1px; top: 0; border-left: 4px solid transparent; border-bottom: 4px solid #555; }
.ex.pl, .ex.mi { height: 6px; background: #fff; border: 1px solid #999; }
.ex.pl::after, .ex.mi::after { content: ""; position: absolute; left: 0; top: 1px; width: 4px; height: 1px; background: #444; }
.ex.pl::before { content: ""; position: absolute; left: 1.500px; top: 0; width: 1px; height: 4px; background: #444; }
.ti { width: 9px; height: 9px; flex: none; }
.ptabs { height: 12px; background: #46597a; display: flex; flex: none; color: #b8c4d8; align-items: center; font-size: 7px; }
.ptabs span { padding: 0 3px; line-height: 12px; margin-right: 4px; }
.ptabs .act { background: #fff; color: #3a6a9a; margin-left: 1px; }

.xcen { flex: 1; position: relative; min-width: 0; padding: 0 17px 0 3px; display: flex; flex-direction: column; }
.dtabs { height: 10px; flex: none; display: flex; justify-content: space-between; }
.dtab { background: #fff; width: 55px; height: 10px; margin-top: 0; text-align: center; color: #333; font-weight: 700; font-size: 7px; line-height: 10px; position: relative; }
.dtab em { position: absolute; right: 3px; font-style: normal; font-weight: 400; color: #666; }
.dmore { color: #fff; position: absolute; right: 21px; top: 0; font-size: 7px; line-height: 9px; }
.dframe { flex: none; height: 445px; background: #f0f0f0; padding: 2px 0 0 3px; display: flex; flex-direction: column; }
.drow { display: flex; height: 429px; flex: none; background: #fff; }
.lad { display: block; flex: none; background: #fff; }
.vscr { flex: 1; background: #f2f2f2; position: relative; }
.vt { position: absolute; left: 5px; top: 20px; width: 1.500px; height: 30px; background: #a8a8a8; }
.hscr { display: flex; justify-content: space-between; padding: 2px 8px 0 4px; color: #999; font-size: 7px; line-height: 11px; }
.xside { position: absolute; right: 1px; top: 4px; width: 15px; writing-mode: vertical-rl; color: #c8d4e6; font-size: 7.200px; line-height: 15px; white-space: nowrap; }
.dbl { height: 15px; margin-top: 2px; background: #46597a; border-bottom: 2px solid #5a6c8c; color: #b8c4d8; display: flex; justify-content: space-between; align-items: center; padding: 0 3px 0 2px; flex: none; font-size: 7px; }
.mons { height: 16px; background: #243656; color: #b8c4d8; display: flex; flex: none; align-items: stretch; padding-left: 4px; gap: 2.500px; font-size: 6.800px; }
.mons span { border-bottom: 2px solid #3f5272; line-height: 14px; padding: 0 1px; }
.mons .find { margin-left: 10px; }
.xst { height: 14px; background: #0a74c4; color: #bcd9f2; display: flex; align-items: center; flex: none; position: relative; font-size: 7px; }
.s1 { margin-left: 190px; width: 155px; }
.s2 { width: 57px; }
.s3 { width: 60px; }
.s4 { width: 39px; }
.sc { width: 9px; height: 9px; flex: none; margin-right: 3.500px; }
.lock { margin-right: 10px; }
.dot { width: 5px; height: 5px; border-radius: 50%; background: #7ec8f0; margin-right: 11px; }
.s5 { margin-left: 1px; width: 24px; }
.s6 { width: 10px; color: #fff; }
.sld { width: 50px; height: 1px; background: #7ab4e0; position: relative; }
.sld i { position: absolute; left: 16px; top: -3px; width: 2px; height: 7px; background: #e6f0fa; }
.s7 { margin-left: 7px; color: #fff; font-size: 9px; }

/* ladder (left) */
.mn { font-family: Roboto, "Noto Sans CJK KR", sans-serif; font-size: 6.600px; letter-spacing: -.25px; }
.cn { font-family: "Noto Sans CJK KR", sans-serif; font-size: 7px; text-anchor: middle; }
.gr { fill: #2f8a3e; }
.bl { fill: #2a3fb8; }
.kk { fill: #222; }
.pk { fill: #e05ae0; }
.mid { text-anchor: middle; }
.en { text-anchor: end; }
.gl { stroke: #9a9a9a; stroke-width: 1; fill: none; }
.kl { stroke: #222; stroke-width: 1.200; fill: none; }
.gv { stroke: #666; stroke-width: 1.500; fill: none; }
.rg { stroke: #777; stroke-width: 1.200; fill: none; }
.fb rect { fill: #fff; stroke: #555; stroke-width: 1.100; }

/* GX main */
.gmain { flex: 1; min-height: 0; display: flex; }
.gnav { width: 119px; margin-left: 1px; flex: none; display: flex; flex-direction: column; background: #f7f7fa; }
.nhead { height: 13px; background: #dfe3ef; display: flex; justify-content: space-between; align-items: center; padding: 0 5px 0 6px; flex: none; color: #333; font-family: "Noto Sans CJK JP", sans-serif; font-size: 6px; letter-spacing: 1.200px; }
.nband { height: 15px; background: linear-gradient(#8e8eaa, #6c6c8e); color: #e8e8f2; padding-left: 3px; line-height: 14px; flex: none; font-family: "Noto Sans CJK JP", sans-serif; font-size: 6px; letter-spacing: 1.200px; font-weight: 700; }
.ntool { height: 13px; background: #dfe2ee; display: flex; align-items: center; gap: 2px; padding-left: 4px; flex: none; }
.gtree { flex: 1; min-height: 0; background: #fff; padding: 0 0 0 2px; overflow: hidden; color: #444; font-family: Roboto, "Noto Sans CJK KR", sans-serif; font-size: 7.300px; }
.gr0 { height: 10px; line-height: 10px; display: flex; align-items: center; white-space: nowrap; }
.gr0 .ti { margin-right: 3px; }
.jk { font-family: "Noto Sans CJK JP", sans-serif; font-size: 5.900px; letter-spacing: .6px; }
.gk { margin-left: 10px; }
.nscr { height: 12px; background: #f4f4f6; flex: none; padding: 3px 10px 0; border-bottom: 2px solid #888c9c; }
.nscr i { display: block; height: 2px; background: #999; width: 75px; }
.nbtn { height: 18px; flex: none; background: linear-gradient(#d6d6e6, #a6a6c0); display: flex; align-items: center; gap: 3px; padding-left: 3px; color: #333; font-family: "Noto Sans CJK JP", sans-serif; font-weight: 700; font-size: 5.800px; letter-spacing: 1px; border-bottom: 1px solid #f0f0f6; }
.nbtn.act { background: linear-gradient(#f9d070, #e89a24); }
.nb { width: 15px; height: 15px; flex: none; }
.nmore { margin-left: auto; margin-right: 4px; }
.gedit { flex: 1; min-width: 0; display: flex; flex-direction: column; margin-left: 3px; border-left: 1px solid #9a9a9a; }
.etabs { height: 14px; flex: none; display: flex; align-items: flex-end; background: #e4e7f2; position: relative; border-bottom: 2px solid #9a9a9a; padding-left: 1px; gap: 3px; font-family: "Noto Sans CJK JP", sans-serif; color: #333; font-size: 6.400px; font-weight: 700; }
.etab { height: 12px; display: flex; align-items: center; background: #fff; border: 1px solid #5a8cc8; border-bottom: 0; border-radius: 3px 3px 0 0; padding: 0 3px; gap: 2px; white-space: nowrap; }
.etab.act { background: linear-gradient(#fff, #fbd795); border-color: #d8a860; width: 130px; position: relative; padding-left: 17px; clip-path: polygon(10px 0, 100% 0, 100% 100%, 0 100%); }
.etab.e2 { width: 113px; }
.etab em { position: absolute; right: 2px; font-style: normal; font-size: 8px; font-weight: 400; background: #f5f5f5; line-height: 9px; }
.enav { position: absolute; right: 17px; top: 0; font-size: 8px; font-weight: 400; color: #555; letter-spacing: 2px; }
.ebody { flex: 1; display: flex; min-height: 0; }
.rlad { display: block; flex: none; background: #fff; border-bottom: 2px solid #8a8a8a; }
.rv { stroke: #6e6e6e; stroke-width: 1; fill: none; }
.rr { stroke: #808080; stroke-width: 1.200; fill: none; }
.tn { font-family: "Liberation Sans", sans-serif; font-size: 4.600px; }
.gg { fill: #2f9a3a; }
.dk { fill: #444; }
.evs { width: 13px; flex: none; background: #f4f4f6; position: relative; border-right: 1px solid #b4b4b4; }
.evs i { position: absolute; left: 6px; top: 83px; width: 1px; height: 8px; background: #888; }
.xref { width: 14px; height: 150px; flex: none; margin-top: -2px; background: #f6d497; border-radius: 4px 0 0 4px; display: flex; flex-direction: column; align-items: center; padding-top: 2px; }
.xref span { writing-mode: vertical-rl; font-family: "Noto Sans CJK JP", sans-serif; font-size: 6.600px; letter-spacing: 1.300px; font-weight: 700; color: #333; white-space: nowrap; line-height: 12px; }
.gtabs { height: 15px; flex: none; display: flex; align-items: flex-end; gap: 20px; padding-left: 13px; background: #e4e7f2; font-family: "Noto Sans CJK JP", sans-serif; font-weight: 700; font-size: 5.800px; letter-spacing: .8px; color: #333; }
.gt1, .gt2 { height: 13px; background: linear-gradient(#f7f0e0, #f6d8a6); border: 1px solid #c8b080; border-bottom: 0; display: flex; align-items: center; padding: 0 3px 0 8px; gap: 2px; white-space: nowrap; clip-path: polygon(8px 0, 100% 0, 100% 100%, 0 100%); }
.gt1 { width: 77px; }
.gt2 { width: 58px; }
.gst { height: 12px; flex: none; background: #f1f1f3; border-top: 1px solid #dcdce4; position: relative; color: #444; font-size: 6.400px; font-family: "Noto Sans CJK JP", sans-serif; display: flex; align-items: center; white-space: nowrap; }
.g-1 { margin-left: 247px; width: 54px; }
.g-2 { width: 186px; letter-spacing: 1px; }
.g-3 { width: 60px; font-family: "Noto Sans", sans-serif; }
.g-4 { width: 115px; }
.g-5 { font-family: "Noto Sans", sans-serif; }
```
